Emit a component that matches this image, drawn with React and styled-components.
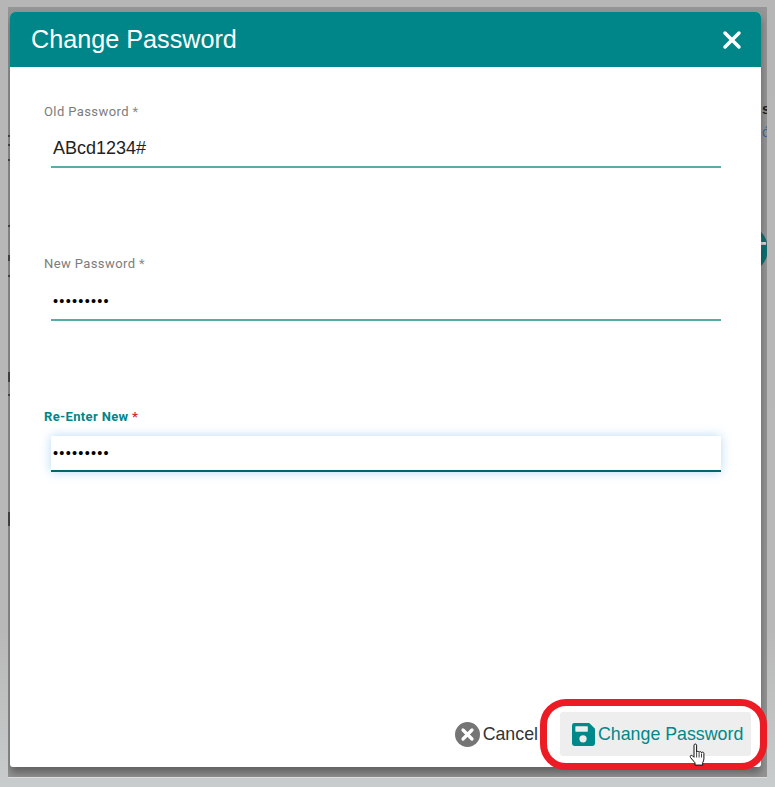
import styled, { createGlobalStyle } from 'styled-components';
import { X } from 'lucide-react';

const GlobalStyle = createGlobalStyle`
  html, body {
    margin: 0;
    padding: 0;
    background: #bcbcbc;
    font-family: "Liberation Sans", Arial, sans-serif;
  }
`;

// bits of the page behind the dialog that peek out on the left edge
const behindMarks = [
  { top: 128, height: 2 },
  { top: 137, height: 2 },
  { top: 152, height: 2 },
  { top: 218, height: 2 },
  { top: 248, height: 6 },
  { top: 268, height: 2 },
  { top: 365, height: 10 },
  { top: 387, height: 2 },
  { top: 505, height: 14 },
];

function SaveIcon() {
  return (
    <svg width="23" height="23" viewBox="0 0 24 24" fill="#00888a">
      <path d="M2.500 0H18l6 6v15.500a2.500 2.500 0 0 1-2.500 2.500h-19A2.500 2.500 0 0 1 0 21.500v-19A2.500 2.500 0 0 1 2.500 0z" />
      <rect x="3.500" y="3.500" width="13" height="5.500" rx="0.500" fill="#eeeeee" />
      <circle cx="11.500" cy="16.500" r="3.800" fill="#eeeeee" />
    </svg>
  );
}

function CancelIcon() {
  return (
    <svg width="25" height="25" viewBox="0 0 25 25">
      <circle cx="12.500" cy="12.500" r="12.500" fill="#757575" />
      <path d="M8 8l9 9M17 8l-9 9" stroke="#fff" strokeWidth="3.200" strokeLinecap="round" />
    </svg>
  );
}

function HandCursor() {
  return (
    <svg width="19" height="24" viewBox="1 0 16 24">
      <path
        d="M5.500 2.200c0-1.600 2.600-1.600 2.600 0v7c0-1 2.400-1.200 2.500.2 0-1 2.300-1.100 2.400.3 0-.9 2.300-.9 2.400.6v5.600c0 1.600-.6 2.600-1.200 3.600v2.600H6.500v-2.300L2 14.500c-1-1.500.6-2.900 1.900-1.800l1.600 1.600z"
        fill="#fff"
        stroke="#111"
        strokeWidth="1"
        strokeLinejoin="round"
      />
      <path d="M8.100 9.500v5M10.600 10v4.500M13 10.500v4" stroke="#111" strokeWidth="0.800" />
    </svg>
  );
}

export default function App() {
  return (
    <Page>
      <GlobalStyle />
      <Frame>
        <BehindText>s</BehindText>
        <BehindLink>ó</BehindLink>
        <BehindFab>+</BehindFab>
        {behindMarks.map((m) => (
          <BehindMark key={m.top} $top={m.top} $height={m.height} />
        ))}
        <Dialog>
          <Header>
            <Title>Change Password</Title>
            <CloseButton>
              <X size={28} strokeWidth={3} color="#fff" />
            </CloseButton>
          </Header>
          <Body>
            <Field>
              <Label>Old Password <Star>*</Star></Label>
              <Input $height={35}>ABcd1234#</Input>
            </Field>
            <Field>
              <Label>New Password <Star>*</Star></Label>
              <Input $height={36} $dots>•••••••••</Input>
            </Field>
            <Field>
              <Label $active>Re-Enter New <Star $active>*</Star></Label>
              <Input $height={34} $dots $active>•••••••••</Input>
            </Field>
          </Body>
          <Footer>
            <CancelButton>
              <CancelIcon />
              Cancel
            </CancelButton>
            <SaveButton>
              <SaveIcon />
              Change Password
            </SaveButton>
          </Footer>
        </Dialog>
      </Frame>
      <Highlight />
      <Cursor>
        <HandCursor />
      </Cursor>
    </Page>
  );
}

const Page = styled.div`
  position: relative;
  width: 775px;
  height: 787px;
  overflow: hidden;
  padding: 7px 8px 0 8px;
  box-sizing: border-box;
  background: linear-gradient(180deg, #b6b6b6 0%, #b8b8b8 80%, #c8cccc 100%);
`;

const Frame = styled.div`
  position: relative;
  overflow: hidden;
  width: 759px;
  height: 771px;
  background: #959595;
  padding: 5px 6px 0 2px;
  box-sizing: border-box;
  border-bottom: 1px solid #dcdcdc;
`;

const BehindText = styled.span`
  position: absolute;
  left: 754px;
  top: 93px;
  font-size: 15px;
  font-weight: bold;
  color: #222;
`;

const BehindLink = styled.span`
  position: absolute;
  left: 754px;
  top: 117px;
  font-size: 14px;
  color: #3a6a9a;
`;

const BehindFab = styled.div`
  position: absolute;
  left: 712px;
  top: 218px;
  width: 48px;
  height: 48px;
  border-radius: 50%;
  background: #0f6f70;
  color: #ddd;
  font-size: 26px;
  font-weight: bold;
  line-height: 37px;
  text-align: right;
  padding-right: 1px;
  box-sizing: border-box;
`;

const BehindMark = styled.div`
  position: absolute;
  left: 0;
  top: ${(p) => p.$top}px;
  width: 2px;
  height: ${(p) => p.$height}px;
  background: #4a4a4a;
`;

const Dialog = styled.div`
  position: relative;
  width: 751px;
  height: 755px;
  background: #fff;
  border-radius: 5px 5px 3px 3px;
  display: flex;
  flex-direction: column;
  box-shadow: 0 6px 8px rgba(0, 0, 0, 0.35);
`;

const Header = styled.div`
  height: 55px;
  background: #008688;
  border-radius: 5px 5px 0 0;
  display: flex;
  align-items: center;
  justify-content: space-between;
  padding: 0 15px 0 21px;
`;

const Title = styled.div`
  color: #fff;
  font-size: 25.2px;
  line-height: 55px;
`;

const CloseButton = styled.div`
  display: flex;
`;

const Body = styled.div`
  flex: 1;
  padding: 37px 40px 0 34px;
  display: flex;
  flex-direction: column;
  gap: 50px;
`;

const Field = styled.div`
  display: flex;
  flex-direction: column;
  height: 102px;
`;

const Label = styled.label`
  font-family: Roboto, "Liberation Sans", sans-serif;
  font-size: 13px;
  line-height: 16px;
  letter-spacing: ${(p) => (p.$active ? '0.35px' : '0.4px')};
  margin-top: ${(p) => (p.$active ? '1px' : '0')};
  color: ${(p) => (p.$active ? '#008688' : '#7c7c7c')};
  font-weight: ${(p) => (p.$active ? 700 : 400)};
`;

const Star = styled.span`
  color: ${(p) => (p.$active ? '#d32f2f' : '#8a8a8a')};
`;

const Input = styled.div`
  margin: ${(p) => (p.$active ? '11px' : '9px')} 0 0 7px;
  height: ${(p) => p.$height}px;
  padding: ${(p) => (p.$active ? '0' : '2px')} 0 0 2px;
  display: flex;
  align-items: center;
  font-size: ${(p) => (p.$dots ? '14.5px' : '18px')};
  letter-spacing: ${(p) => (p.$dots ? '1.25px' : '0')};
  color: ${(p) => (p.$dots ? '#000' : '#222')};
  border-bottom: ${(p) => (p.$active ? '2px solid #00686a' : '2px solid #58aca8')};
  box-shadow: ${(p) => (p.$active ? '0 0 10px rgba(90, 170, 235, 0.45)' : 'none')};
  background: #fff;
`;

const Footer = styled.div`
  height: 66px;
  padding: 2px 10px 0 0;
  display: flex;
  justify-content: flex-end;
  align-items: center;
  gap: 22px;
`;

const CancelButton = styled.div`
  display: flex;
  align-items: center;
  gap: 3px;
  font-size: 17.8px;
  color: #333;
`;

const SaveButton = styled.div`
  display: flex;
  align-items: center;
  gap: 3px;
  width: 191px;
  height: 44px;
  box-sizing: border-box;
  padding-left: 12px;
  background: #eeeeee;
  border-radius: 3px;
  font-size: 17.8px;
  color: #00888a;
`;

const Highlight = styled.div`
  position: absolute;
  z-index: 3;
  left: 540px;
  top: 699px;
  width: 227px;
  height: 71px;
  box-sizing: border-box;
  border: 7px solid #ed1c24;
  border-radius: 26px;
`;

const Cursor = styled.div`
  position: absolute;
  z-index: 4;
  left: 688px;
  top: 743px;
`;
